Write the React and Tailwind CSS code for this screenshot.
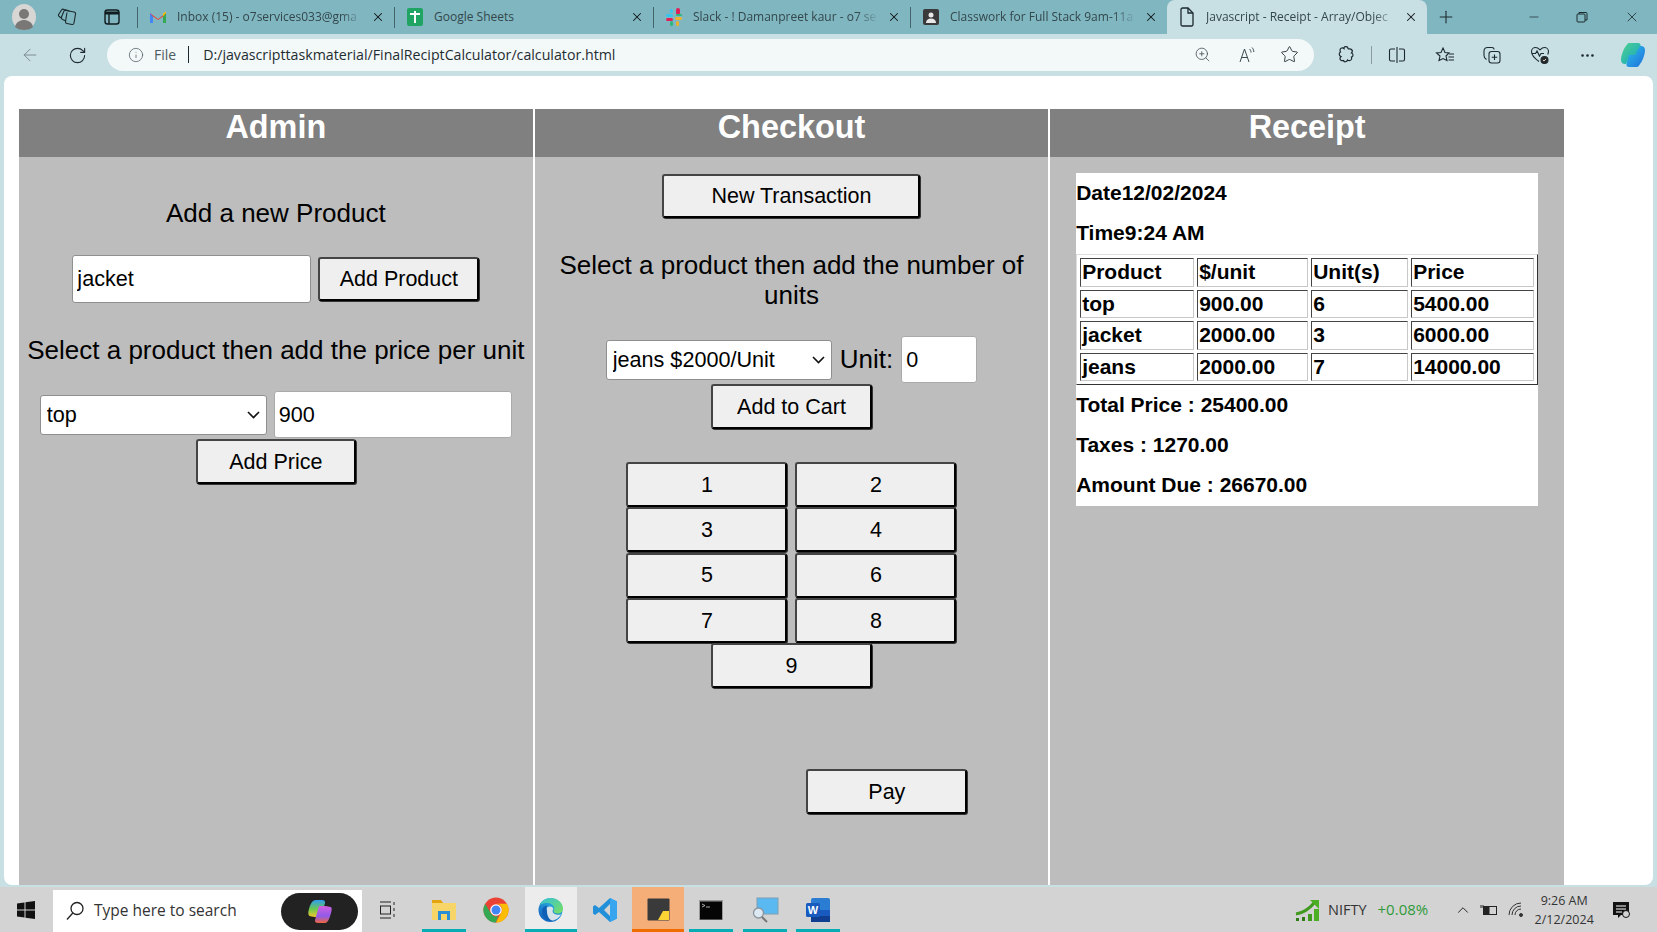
import React from "react";
import { ArrowLeft, RotateCw, Info, ZoomIn, Star, X, Plus, Minus, ChevronUp, MoreHorizontal } from "lucide-react";

const btn = "bg-[#efefef] border-2 border-[#444444] border-r-black border-b-black rounded-[3px] shadow-[1px_1px_0_#333333] text-black text-[21.5px] leading-none pt-[2px]";
const field = "bg-white border border-[#8f8f8f] rounded-[3px] text-black text-[21.6px] pl-[4px] outline-none";

const GmailIcon = () => (
  <svg width="18" height="14" viewBox="0 0 18 14">
    <path d="M1 13V3l8 6 8-6v10h-3V6.500L9 10 4 6.500V13z" fill="#ea4335" />
    <path d="M1 13h3V6.500L1 3z" fill="#4285f4" />
    <path d="M14 13h3V3l-3 3.500z" fill="#34a853" />
    <path d="M14 6.500L17 3V1.500L14 3.500z" fill="#fbbc04" />
  </svg>
);

const SheetsIcon = () => (
  <svg width="18" height="20" viewBox="0 0 18 20">
    <rect x="1" y="1" width="16" height="18" rx="2" fill="#1fa463" />
    <path d="M4 6h4V4h2v2h4v2h-4v8H8V8H4z" fill="#fff" />
  </svg>
);

const SlackIcon = () => (
  <svg width="18" height="20" viewBox="0 0 18 20">
    <rect x="11" y="1" width="4" height="7" rx="2" fill="#e01e5a" />
    <rect x="1" y="7" width="7" height="3" rx="1.500" fill="#36c5f0" />
    <rect x="5" y="2" width="3" height="4" rx="1.500" fill="#36c5f0" />
    <rect x="10" y="10" width="7" height="3" rx="1.500" fill="#ecb22e" />
    <rect x="11" y="14" width="3" height="5" rx="1.500" fill="#ecb22e" />
    <rect x="1" y="11" width="7" height="3" rx="1.500" fill="#e01e5a" />
    <rect x="5" y="14" width="3" height="5" rx="1.500" fill="#2eb67d" />
    <rect x="11" y="7" width="6" height="2" rx="1" fill="#2eb67d" />
  </svg>
);

const ClassroomIcon = () => (
  <svg width="18" height="18" viewBox="0 0 18 18">
    <rect x="1" y="1" width="16" height="16" rx="2" fill="#3a3a3a" />
    <circle cx="9" cy="7" r="2.500" fill="#e8e8e8" />
    <path d="M4 15c0-3 2-4.500 5-4.500s5 1.500 5 4.500z" fill="#e8e8e8" />
  </svg>
);

const DocIcon = () => (
  <svg width="16" height="20" viewBox="0 0 16 20" fill="none" stroke="#1c2a2e" strokeWidth="1.300">
    <path d="M2 2.500A1.500 1.500 0 0 1 3.500 1H9l5 5v11.500A1.500 1.500 0 0 1 12.500 19h-9A1.500 1.500 0 0 1 2 17.500z" />
    <path d="M9 1v5h5" />
  </svg>
);

const Avatar = () => (
  <svg width="24" height="26" viewBox="0 0 24 26">
    <ellipse cx="12" cy="13" rx="12" ry="13" fill="#d8d6d4" />
    <circle cx="12" cy="10" r="5" fill="#7a7876" />
    <path d="M3 23c1-5 5-7 9-7s8 2 9 7c-2 2-5 3-9 3s-7-1-9-3z" fill="#7a7876" />
  </svg>
);

const ChromeIcons = {
  workspaces: (
    <svg width="20" height="18" viewBox="0 0 20 18" fill="none" stroke="#1c2a2e" strokeWidth="1.100">
      <path d="M9 2.500l8 1.500c1 .2 1.700 1 1.500 2L17 15c-.2 1-1 1.700-2 1.500l-5-1c-1-.2-1.700-1-1.500-2L10 4.500" />
      <path d="M9 13L5.500 11.500C4.500 11 4.200 10 4.500 9L7 3c.4-1 1.500-1.400 2.500-1l3 1.200" />
      <path d="M5 10.500L2.200 8.500C1.400 8 1.200 7 1.800 6.200L4.500 2c.6-.8 1.600-1 2.400-.5L9 2.800" />
    </svg>
  ),
  vertical: (
    <svg width="18" height="18" viewBox="0 0 18 18" fill="none" stroke="#111c1f" strokeWidth="1.400">
      <rect x="2" y="2" width="14" height="14" rx="2.500" />
      <path d="M2 5h14" strokeWidth="3" />
      <path d="M6 5v11" />
    </svg>
  ),
  read: (
    <svg width="20" height="18" viewBox="0 0 20 18" fill="none" stroke="#3a4a4e" strokeWidth="1">
      <path d="M2 16L6.500 3 11 16M3.500 11.500h6" />
      <path d="M11.500 3c1 1 1.500 2 1.500 3.500M14 1.500c1.200 1.300 1.800 2.700 1.800 4.500" />
    </svg>
  ),
  extensions: (
    <svg width="20" height="20" viewBox="0 0 20 20" fill="none" stroke="#1c2a2e" strokeWidth="1.200">
      <path d="M8 2.500c1-1.500 4-1 4 1 0 1 2-.5 3.500 1 1.500 1.500.5 3 0 3.500 2 .5 2 3.500 0 4 .5 1.500 0 3-1.500 3.500-1 .3-2-.2-2.500-.5-.5 2-3.500 2.500-4 .5-1.500.5-3.500 0-3.500-2 0-1 .5-1.500 1-2-2-.5-2.500-3.500-.5-4.500-1-1.500-.5-3.500 1-4 1-.3 2 0 2.500.5z" />
    </svg>
  ),
  split: (
    <svg width="18" height="18" viewBox="0 0 18 18" fill="none" stroke="#1c2a2e" strokeWidth="1.100">
      <path d="M7 3H3a1.500 1.500 0 0 0-1.500 1.500v9A1.500 1.500 0 0 0 3 15h4M11 3h4a1.500 1.500 0 0 1 1.500 1.500v9A1.500 1.500 0 0 1 15 15h-4M9 1v16" />
    </svg>
  ),
  favorites: (
    <svg width="20" height="18" viewBox="0 0 20 18" fill="none" stroke="#1c2a2e" strokeWidth="1.100">
      <path d="M8 2l2 4.500 4 .5-3 3 1 4.500L8 12.500 4 14.500l1-4.500L1.500 7 6 6.500z" />
      <path d="M14 8h5M13.500 11h5.500M13.500 14h5.500" />
    </svg>
  ),
  collections: (
    <svg width="20" height="20" viewBox="0 0 20 20" fill="none" stroke="#1c2a2e" strokeWidth="1.100">
      <path d="M4.500 14.500C3 13.500 2 12 2 10.500V6c0-2 1.500-3.500 3.500-3.500H10c1.200 0 2 .8 2.200 2" />
      <rect x="7" y="6.500" width="11" height="11.500" rx="2.500" />
      <path d="M12.500 9.500v5.500M9.700 12.200h5.600" />
    </svg>
  ),
  heart: (
    <svg width="20" height="20" viewBox="0 0 20 20" fill="none" stroke="#1c2a2e" strokeWidth="1.100">
      <path d="M9 16.500C5.500 14 1.500 11 1.500 6.500 1.500 4 3.500 2.500 5.500 2.500c1.800 0 3.200 1 4.500 2.300 1.300-1.300 2.700-2.300 4.500-2.300 2 0 4 1.500 4 4 0 1-.3 2-.8 3" />
      <path d="M2 8.500h3.500l1.500-2.500 2.500 5 1.500-2.500h3" />
      <circle cx="14.500" cy="15" r="3.500" fill="#2a2a2a" />
      <path d="M13 15l1 1 2-2" stroke="#fff" strokeWidth="0.800" />
    </svg>
  ),
};

const CopilotMark = ({ size = 26 }) => (
  <svg width={size} height={size} viewBox="0 0 26 26">
    <defs>
      <linearGradient id="cpa" x1="0" y1="0" x2="1" y2="1">
        <stop offset="0" stopColor="#2cc0e8" />
        <stop offset="1" stopColor="#1f6fdc" />
      </linearGradient>
      <linearGradient id="cpb" x1="0" y1="0" x2="1" y2="1">
        <stop offset="0" stopColor="#4fd18b" />
        <stop offset="1" stopColor="#14a5c9" />
      </linearGradient>
    </defs>
    <path d="M9 1h9c2 0 3 1.500 2.500 3L17 13h-6L6 22c-3 .5-5-1-5-4 0-5 3-12 5-14 .7-1 1.800-3 3-3z" fill="url(#cpb)" />
    <path d="M17 25H9c-2 0-3-1.500-2.500-3L9 13h6l5-9c3-.5 5 1 5 4 0 5-3 12-5 14-.7 1-1.800 3-3 3z" fill="url(#cpa)" />
  </svg>
);

const CopilotPill = () => (
  <svg width="26" height="25" viewBox="0 0 26 25">
    <defs>
      <linearGradient id="pila" x1="0" y1="0" x2="0" y2="1">
        <stop offset="0" stopColor="#2f9df0" />
        <stop offset="0.55" stopColor="#6ecb4a" />
        <stop offset="1" stopColor="#f6c52d" />
      </linearGradient>
      <linearGradient id="pilb" x1="0" y1="0" x2="0" y2="1">
        <stop offset="0" stopColor="#d45fe0" />
        <stop offset="0.6" stopColor="#8f5be8" />
        <stop offset="1" stopColor="#f2653b" />
      </linearGradient>
    </defs>
    <path d="M9 1h6c2 0 3.500 1 3 3l-4 14H8c-3 0-4-1-5.500-1C1 16 1 13 2 10c1-4 3-9 7-9z" fill="url(#pila)" />
    <path d="M17 24h-6c-2 0-3.500-1-3-3l4-14h6c3 0 4 1 5.500 1C25 8 25 11 24 14c-1 4-3 10-6 10z" fill="url(#pilb)" />
  </svg>
);

const Tab = ({ width, icon, title, fade = true, active }) => (
  <div className={`h-full flex items-center shrink-0 pl-[11px] pr-[9px] ${active ? "bg-[#c8dfe4] rounded-t-[8px]" : ""}`} style={{ width }}>
    <div className="w-[18px] flex justify-center shrink-0">{icon}</div>
    <div className={`flex-1 min-w-0 ml-[10px] whitespace-nowrap font-['Open_Sans',sans-serif] text-[12px] text-[#33474c] ${fade ? "[mask-image:linear-gradient(to_right,black_88%,transparent)]" : ""}`}>
      {title}
    </div>
    <X size={14} strokeWidth={1.800} className="text-[#10181a] ml-[8px] shrink-0" />
  </div>
);

const Sep = () => <div className="w-px h-[21px] bg-[#44656c] shrink-0" />;

const TabStrip = () => (
  <div className="h-[34px] bg-[#80b6c0] flex items-center shrink-0">
    <div className="w-[137px] flex items-center shrink-0">
      <div className="ml-[12px]"><Avatar /></div>
      <div className="ml-[21px]">{ChromeIcons.workspaces}</div>
      <div className="ml-[26px]">{ChromeIcons.vertical}</div>
    </div>
    <Sep />
    <Tab width="256px" icon={<GmailIcon />} title="Inbox (15) - o7services033@gma" />
    <Sep />
    <Tab width="258px" icon={<SheetsIcon />} title="Google Sheets" fade={false} />
    <Sep />
    <Tab width="256px" icon={<SlackIcon />} title="Slack - ! Damanpreet kaur - o7 se" />
    <Sep />
    <Tab width="256px" icon={<ClassroomIcon />} title="Classwork for Full Stack 9am-11a" />
    <Tab width="260px" active icon={<DocIcon />} title="Javascript - Receipt - Array/Objec" />
    <Plus size={20} strokeWidth={1.300} className="text-[#1c2a2e] ml-[9px]" />
    <Minus size={14} strokeWidth={1.200} className="text-[#1c2a2e] ml-[71px]" />
    <svg width="12" height="12" viewBox="0 0 12 12" fill="none" stroke="#1c2a2e" strokeWidth="1" className="ml-[35px]">
      <rect x="1" y="3" width="8" height="8" rx="1" />
      <path d="M3 3V1.500h7a1 1 0 0 1 1 1V9H9" />
    </svg>
    <X size={16} strokeWidth={1.200} className="text-[#1c2a2e] ml-[36px]" />
  </div>
);

const Toolbar = () => (
  <div className="h-[42px] bg-[#c8dfe4] flex items-center shrink-0">
    <ArrowLeft size={20} strokeWidth={1.200} className="text-[#7c8d92] ml-[20px]" />
    <RotateCw size={19} strokeWidth={1.400} className="text-[#1c2a2e] ml-[28px]" />
    <div className="ml-[20px] w-[1207px] h-[32px] rounded-full bg-[#f3f8f9] flex items-center font-['Open_Sans',sans-serif] pb-[1px]">
      <Info size={16} strokeWidth={1.100} className="text-[#4a5a5e] ml-[21px]" />
      <span className="ml-[10px] text-[14px] text-[#4d5c60]">File</span>
      <span className="ml-[12px] w-px h-[17px] bg-[#1c2a2e]" />
      <span className="ml-[14px] text-[14.200px] text-[#1f2d31]">D:/javascripttaskmaterial/FinalReciptCalculator/calculator.html</span>
      <ZoomIn size={17} strokeWidth={1.100} className="text-[#3a4a4e] ml-auto" />
      <div className="ml-[27px]">{ChromeIcons.read}</div>
      <Star size={19} strokeWidth={1.100} className="text-[#1c2a2e] ml-[22px] mr-[15px]" />
    </div>
    <div className="ml-[22px]">{ChromeIcons.extensions}</div>
    <span className="ml-[15px] w-px h-[18px] bg-[#8a9ca1]" />
    <div className="ml-[16px]">{ChromeIcons.split}</div>
    <div className="ml-[29px]">{ChromeIcons.favorites}</div>
    <div className="ml-[27px]">{ChromeIcons.collections}</div>
    <div className="ml-[28px]">{ChromeIcons.heart}</div>
    <MoreHorizontal size={17} strokeWidth={1.800} className="text-[#1c2a2e] ml-[29px]" />
    <div className="ml-[24px]"><CopilotMark /></div>
  </div>
);

const Select = ({ className, value, options }) => (
  <div className={`relative ${className}`}>
    <select className={`${field} appearance-none w-full h-full pl-[6px] pt-[2px]`} defaultValue={value}>
      {options.map((o) => (
        <option key={o}>{o}</option>
      ))}
    </select>
    <svg width="13" height="8" viewBox="0 0 13 8" fill="none" stroke="#111111" strokeWidth="1.600" className="absolute right-[7px] top-[16px] pointer-events-none">
      <path d="M1 1l5.500 5.500L12 1" />
    </svg>
  </div>
);

const Panel = ({ title, children }) => (
  <div className="bg-[#bdbdbd] flex flex-col items-center h-full">
    <div className="w-full h-[48px] bg-[#808080] text-white font-bold text-[32.400px] leading-[37px] text-center shrink-0">{title}</div>
    {children}
  </div>
);

const Admin = () => (
  <Panel title="Admin">
    <div className="mt-[41px] text-[26px] leading-[30px]">Add a new Product</div>
    <div className="mt-[27px] flex items-center gap-[7px]">
      <input className={`${field} w-[239px] h-[48px]`} defaultValue="jacket" />
      <button className={`${btn} w-[161px] h-[44px]`}>Add Product</button>
    </div>
    <div className="mt-[32px] text-[26px] leading-[30px] whitespace-nowrap">Select a product then add the price per unit</div>
    <div className="mt-[26px] flex items-center gap-[7px]">
      <Select className="w-[227px] h-[40px]" value="top" options={["top", "jacket", "jeans"]} />
      <input className={`${field} w-[238px] h-[47px] border-[#aaaaaa]`} defaultValue="900" />
    </div>
    <button className={`${btn} w-[160px] h-[45px] mt-[1px]`}>Add Price</button>
  </Panel>
);

const Checkout = () => (
  <Panel title="Checkout">
    <button className={`${btn} w-[258px] h-[44px] mt-[17px]`}>New Transaction</button>
    <div className="mt-[33px] px-[20px] text-[26px] leading-[29.500px] text-center">Select a product then add the number of units</div>
    <div className="mt-[26px] flex items-center">
      <Select className="w-[226px] h-[40px]" value="jeans $2000/Unit" options={["top $900/Unit", "jacket $2000/Unit", "jeans $2000/Unit"]} />
      <span className="ml-[8px] text-[26px]">Unit:</span>
      <input className={`${field} ml-[8px] w-[76px] h-[47px] border-[#aaaaaa]`} defaultValue="0" />
    </div>
    <button className={`${btn} w-[161px] h-[45px] mt-[1px]`}>Add to Cart</button>
    <div className="mt-[33px] grid grid-cols-[161px_161px] gap-x-[8px] gap-y-[0.300px]">
      {[1, 2, 3, 4, 5, 6, 7, 8].map((n) => (
        <button key={n} className={`${btn} h-[45px]`}>{n}</button>
      ))}
      <button className={`${btn} h-[45px] w-[161px] col-span-2 justify-self-center`}>9</button>
    </div>
    <div className="w-full flex justify-end mt-[81px] pr-[81px]">
      <button className={`${btn} w-[161px] h-[45px]`}>Pay</button>
    </div>
  </Panel>
);

const rows = [
  ["top", "900.00", "6", "5400.00"],
  ["jacket", "2000.00", "3", "6000.00"],
  ["jeans", "2000.00", "7", "14000.00"],
];

const cell = "border border-[#444444] border-r-[#c8c8c8] border-b-[#c8c8c8] h-[28.500px] p-0 pl-[1px] text-left font-bold leading-[26px]";

const Receipt = () => (
  <Panel title="Receipt">
    <div className="mt-[16px] w-[462px] bg-white text-black font-bold text-[21px] leading-[24px] pt-[8px] pb-[9px]">
      <div>Date12/02/2024</div>
      <div className="mt-[16px]">Time9:24 AM</div>
      <table className="mt-[9px] w-full table-fixed border-separate border-spacing-[3px] border border-[#dddddd] border-r-[#333333] border-b-[#333333]">
        <colgroup>
          <col className="w-[114px]" />
          <col className="w-[111px]" />
          <col className="w-[97px]" />
          <col />
        </colgroup>
        <thead>
          <tr>
            <th className={cell}>Product</th>
            <th className={cell}>$/unit</th>
            <th className={cell}>Unit(s)</th>
            <th className={cell}>Price</th>
          </tr>
        </thead>
        <tbody>
          {rows.map((r) => (
            <tr key={r[0]}>
              {r.map((c, i) => (
                <td key={i} className={cell}>{c}</td>
              ))}
            </tr>
          ))}
        </tbody>
      </table>
      <div className="mt-[8px]">Total Price : 25400.00</div>
      <div className="mt-[16px]">Taxes : 1270.00</div>
      <div className="mt-[16px]">Amount Due : 26670.00</div>
    </div>
  </Panel>
);

const Slot = ({ w, tile, line, children }) => (
  <div className={`h-full flex flex-col items-center justify-center relative shrink-0 ${tile || ""}`} style={{ width: w }}>
    {children}
    {line && <div className={`absolute bottom-0 left-0 right-0 h-[3px] ${line}`} />}
  </div>
);

const Taskbar = () => (
  <div className="h-[45px] bg-[#d3d3d3] flex items-center shrink-0 font-['Open_Sans',sans-serif]">
    <svg width="18" height="18" viewBox="0 0 18 18" className="ml-[17px] shrink-0" fill="#111">
      <path d="M0 2.500L7.500 1.500V8.500H0zM8.500 1.300L18 0V8.500H8.500zM0 9.500H7.500V16.500L0 15.500zM8.500 9.500H18V18L8.500 16.700z" />
    </svg>
    <div className="ml-[18px] w-[309px] h-[42px] mt-[3px] bg-white flex items-center shrink-0">
      <svg width="20" height="20" viewBox="0 0 20 20" fill="none" stroke="#222" strokeWidth="1.300" className="ml-[12px]">
        <circle cx="12" cy="7.500" r="6" />
        <path d="M7.800 12L2 18.500" />
      </svg>
      <span className="ml-[9px] pb-[1px] text-[15.500px] text-[#333] w-[150px] whitespace-nowrap">Type here to search</span>
      <div className="ml-auto mr-[4px] w-[77px] h-[37px] rounded-full bg-[#222222] flex items-center justify-center">
        <CopilotPill />
      </div>
    </div>
    <svg width="18" height="20" viewBox="0 0 18 20" fill="none" stroke="#222" strokeWidth="1" className="ml-[17px] shrink-0">
      <rect x="1.500" y="6" width="10" height="8" />
      <path d="M1 2h11M1 18h11M15 2v3M15 8v3M15 14v3" />
    </svg>
    <div className="ml-[25px] flex h-full items-center">
      <Slot w="44px" line="bg-[#06adb5]">
        <svg width="24" height="22" viewBox="0 0 24 22">
          <path d="M0 2h9l2 2h13v17H0z" fill="#f8d568" />
          <path d="M0 1h9l2 3H0z" fill="#e2a30e" />
          <path d="M6 21V12h12v9h-3v-6H9v6z" fill="#2a8fd6" />
        </svg>
      </Slot>
      <div className="w-[8px]" />
      <Slot w="44px">
        <svg width="26" height="26" viewBox="0 0 26 26">
          <circle cx="13" cy="13" r="12.500" fill="#ea4335" />
          <path d="M13 25.500A12.500 12.500 0 0 1 2.200 6.700L8 16.500a6 6 0 0 0 7 2.500z" fill="#34a853" />
          <path d="M13 25.500a12.500 12.500 0 0 0 10.800-18.800H13a6 6 0 0 1 5 9.300z" fill="#fbbc04" />
          <circle cx="13" cy="13" r="5.800" fill="#fff" />
          <circle cx="13" cy="13" r="4.500" fill="#4285f4" />
        </svg>
      </Slot>
      <div className="w-[7px]" />
      <Slot w="52px" tile="bg-[#ececec]" line="bg-[#06adb5]">
        <svg width="26" height="26" viewBox="0 0 26 26">
          <defs>
            <linearGradient id="edg" x1="0.200" y1="0.900" x2="0.700" y2="0.200">
              <stop offset="0" stopColor="#1464c0" />
              <stop offset="1" stopColor="#2ab1e0" />
            </linearGradient>
            <linearGradient id="edt" x1="0" y1="0" x2="1" y2="1">
              <stop offset="0" stopColor="#35c1d8" />
              <stop offset="1" stopColor="#7be05f" />
            </linearGradient>
          </defs>
          <circle cx="12.500" cy="13" r="12" fill="url(#edg)" />
          <path d="M2 8C4 3 8 1 12.500 1c7 0 12.500 5 12.500 10.500 0 3-2.500 5-5.500 5-2 0-4-.8-4-2.500 0-1 .8-1.500.8-2.500 0-3-3-5.500-6.500-5.500C6.500 6 4 6.500 2 8z" fill="url(#edt)" />
          <path d="M7.500 14c0-2.500 2-4.500 4.500-4.500 2 0 3.300 1 3.300 2.300 0 .8-.7 1.300-.7 2.200 0 2.500 3 3.800 5.400 3.800 1 0 2-.2 3-.6-2 4-6 6.300-9.500 6.300-4 0-6-5-6-9.500z" fill="#ececec" opacity="0.900" />
          <path d="M9 14.500c0 4 2 8 5.500 9.500-5 .5-10.500-3.500-10.500-10 0-3 2-5 5-5.500-1.200 1.500 0 3 0 6z" fill="#0f5fb5" />
        </svg>
      </Slot>
      <Slot w="55px">
        <svg width="26" height="26" viewBox="0 0 26 26">
          <path d="M18 1l7 3.500v17L18 25 7 15l-4 3-2-1.500V9.500L3 8l4 3z" fill="#2190d8" />
          <path d="M18 1l7 3.500v17L18 25z" fill="#37a6ef" />
          <path d="M18 7l-6 6 6 6z" fill="#d3d3d3" />
        </svg>
      </Slot>
      <Slot w="52px" tile="bg-[#f5ae78]" line="bg-[#ef6c00]">
        <svg width="23" height="23" viewBox="0 0 23 23">
          <rect x="0.500" y="0.500" width="22" height="22" rx="1" fill="#3a3a3a" />
          <path d="M11 22l5-9h6v9z" fill="#fbd335" />
        </svg>
      </Slot>
      <div className="w-[5px]" />
      <Slot w="44px" line="bg-[#06adb5]">
        <svg width="24" height="20" viewBox="0 0 24 20">
          <rect x="0" y="0" width="24" height="20" fill="#9a9a9a" />
          <rect x="1" y="1.500" width="22" height="18" fill="#050505" />
          <path d="M3 4l3 1.500-3 1.500M7 7h4" stroke="#ccc" strokeWidth="0.800" fill="none" />
        </svg>
      </Slot>
      <div className="w-[10px]" />
      <Slot w="44px" line="bg-[#06adb5]">
        <svg width="28" height="28" viewBox="0 0 28 28">
          <rect x="6" y="2" width="21" height="16" fill="#5ab9f0" stroke="#7fa0b4" strokeWidth="1" />
          <circle cx="7.500" cy="17" r="5" fill="#dce9f0" stroke="#8b95a0" strokeWidth="1.300" />
          <path d="M11 21l5 5" stroke="#777" strokeWidth="2" />
        </svg>
      </Slot>
      <div className="w-[9px]" />
      <Slot w="44px" line="bg-[#06adb5]">
        <svg width="26" height="26" viewBox="0 0 26 26">
          <rect x="6" y="1" width="19" height="24" rx="2" fill="#2b7cd3" />
          <rect x="6" y="13" width="19" height="6" fill="#185abd" />
          <rect x="6" y="19" width="19" height="6" fill="#103f91" />
          <rect x="1" y="6" width="14" height="14" rx="1.500" fill="#185abd" />
          <text x="8" y="17" fontSize="11" fontWeight="700" textAnchor="middle" fill="#fff" fontFamily="Liberation Sans, sans-serif">W</text>
        </svg>
      </Slot>
    </div>
    <svg width="26" height="24" viewBox="0 0 26 24" className="ml-[455px] shrink-0">
      <path d="M1 16C8 15 15 10 20 4" stroke="#3f9a1e" strokeWidth="3" fill="none" />
      <path d="M15 2h9v9z" fill="#4caf23" />
      <rect x="1" y="20" width="3" height="3" fill="#2f7d17" />
      <rect x="7" y="19" width="3" height="4" fill="#2f7d17" />
      <rect x="13" y="16" width="4" height="7" fill="#3f9a1e" />
      <rect x="19" y="11" width="5" height="12" fill="#4caf23" />
    </svg>
    <span className="ml-[7px] text-[14.500px] text-[#333]">NIFTY</span>
    <span className="ml-[11px] text-[15px] text-[#2f9a3a]">+0.08%</span>
    <ChevronUp size={18} strokeWidth={1.300} className="text-[#222] ml-[26px]" />
    <svg width="18" height="12" viewBox="0 0 18 12" fill="none" stroke="#222" strokeWidth="1" className="ml-[8px] shrink-0">
      <rect x="3.500" y="2.500" width="13" height="8" />
      <rect x="4" y="3" width="5" height="7" fill="#222" />
      <path d="M1 1v3M3 1v3" />
    </svg>
    <svg width="16" height="16" viewBox="0 0 16 16" fill="none" stroke="#333" strokeWidth="1" className="ml-[10px] shrink-0">
      <path d="M1 13a12 12 0 0 1 12-12M4 13a9 9 0 0 1 9-9M7 13a6 6 0 0 1 6-6" />
      <circle cx="13" cy="13" r="1.500" fill="#333" />
    </svg>
    <div className="ml-[5px] w-[70px] text-center text-[12.500px] leading-[19px] text-[#333] whitespace-nowrap">
      <div>9:26 AM</div>
      <div>2/12/2024</div>
    </div>
    <svg width="18" height="18" viewBox="0 0 18 18" className="ml-[13px] shrink-0">
      <path d="M1 1h16v13H9l-3 3v-3H1z" fill="#111" />
      <path d="M4 5h10M4 8h10M4 11h6" stroke="#fff" strokeWidth="1" />
      <circle cx="14" cy="13" r="3.500" fill="#d3d3d3" stroke="#111" />
    </svg>
  </div>
);

export default function App() {
  return (
    <div className="h-[932px] w-[1657px] flex flex-col overflow-hidden font-['Liberation_Sans',Arial,sans-serif] text-black">
      <TabStrip />
      <Toolbar />
      <div className="flex-1 min-h-0 bg-[#c8dfe4] px-[4px] pb-[2px] flex">
        <div className="flex-1 bg-white rounded-[8px] pt-[33px] pl-[15px] overflow-hidden">
          <div className="w-[1545px] h-full grid grid-cols-3 gap-[2px]">
            <Admin />
            <Checkout />
            <Receipt />
          </div>
        </div>
      </div>
      <Taskbar />
    </div>
  );
}
